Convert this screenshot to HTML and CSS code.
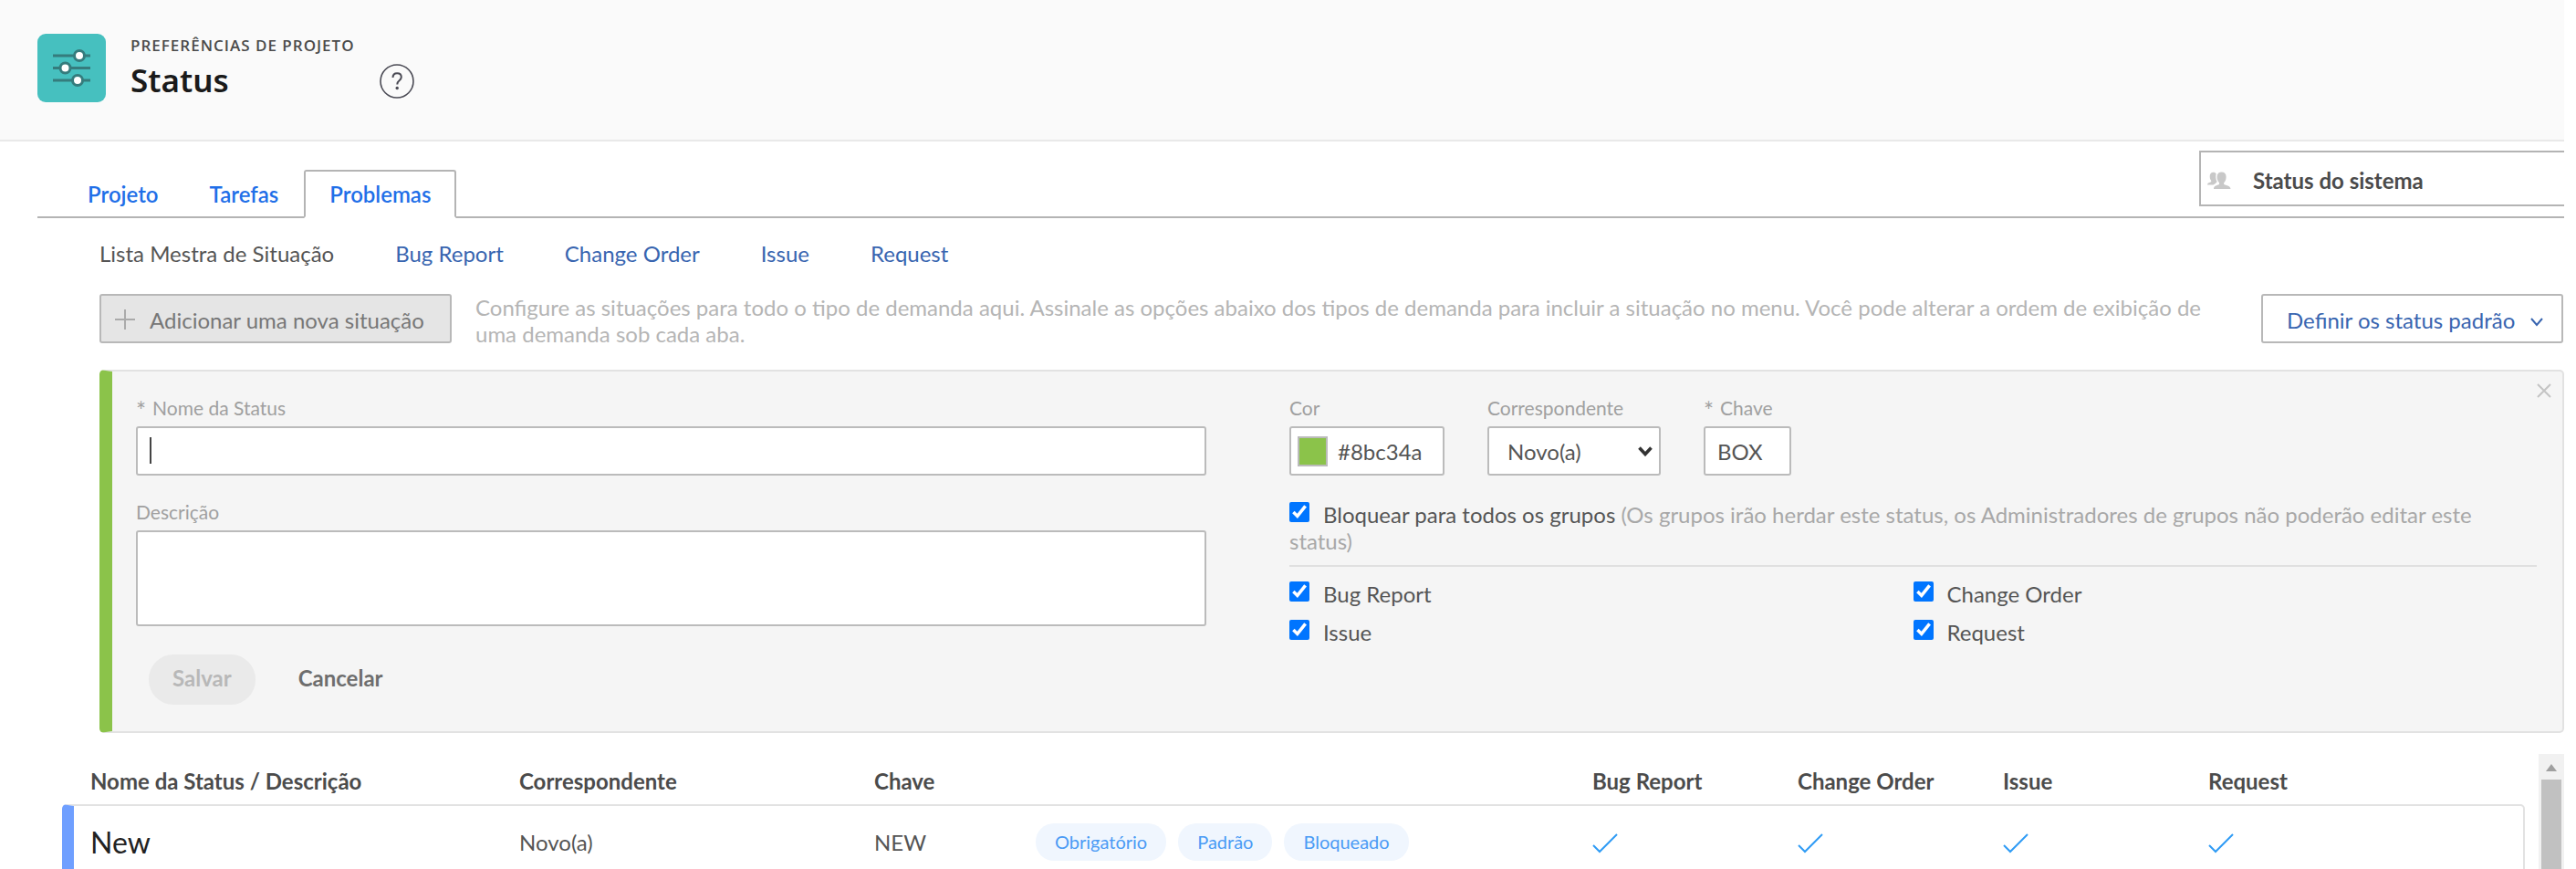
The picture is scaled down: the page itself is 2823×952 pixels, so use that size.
FILE: index.html
```html
<!DOCTYPE html>
<html lang="pt-BR">
<head>
<meta charset="utf-8">
<title>Status</title>
<link rel="stylesheet" href="styles.css">
</head>
<body>
<div class="page">
  <header class="page-header">
    <svg class="app-icon" viewBox="0 0 75 75" aria-hidden="true">
      <rect width="75" height="75" rx="9" fill="#46c0bf"/>
      <g stroke="#357c7d" stroke-width="3" fill="#fff">
        <path d="M17 24h41M17 37.500h41M17 51h41"/>
        <circle cx="46" cy="24" r="5.500"/>
        <circle cx="30.500" cy="37.500" r="5.500"/>
        <circle cx="44" cy="51" r="5.500"/>
      </g>
    </svg>
    <div class="titles">
      <p class="eyebrow">PREFERÊNCIAS DE PROJETO</p>
      <h1 class="title">Status</h1>
    </div>
    <button class="help" type="button" aria-label="Ajuda">
      <svg width="38" height="38" viewBox="0 0 38 38" fill="none" stroke="#4b4b55" stroke-width="1.600">
        <circle cx="19" cy="19" r="18"/>
        <path d="M14.500 15c0-3 2-4.800 4.700-4.800 2.800 0 4.600 1.700 4.600 4.200 0 2-1.200 3-2.500 4.100-1.300 1-2 1.800-2 3.900" stroke-width="2"/>
        <circle cx="19.200" cy="26.500" r="1.700" fill="#4b4b55" stroke="none"/>
      </svg>
    </button>
  </header>

  <nav class="tabs">
    <a class="tab" href="#">Projeto</a>
    <a class="tab" href="#">Tarefas</a>
    <a class="tab tab-active" href="#">Problemas</a>
    <button class="scope" type="button">
      <svg width="26" height="20" viewBox="0 0 26 20" fill="#c8c8c8" aria-hidden="true">
        <path d="M7 19c0-3 2-3.600 5-4.500 1.500-.5 1.300-2 .5-3C11 10 10.600 8 10.600 5.600c0-3.400 2-5.200 5-5.200s5 1.800 5 5.200c0 2.400-.4 4.400-1.900 5.900-.8 1-1 2.500.5 3 3.400.9 6 1.500 6.300 4.500z"/>
        <path d="M0 14.500c0-2 1.600-2.400 3.500-3 1-.4 1-1.400.4-2C3 8.500 2.700 7 2.700 5.300c0-3 1.400-4.500 3.800-4.500 1.500 0 2.600.6 3.200 1.700-.9 2.500-.5 6 .9 8.700l-2.100 2-2 1.300z"/>
      </svg>
      <span>Status do sistema</span>
    </button>
  </nav>

  <nav class="subnav">
    <span class="subnav-current">Lista Mestra de Situação</span>
    <a href="#">Bug Report</a>
    <a href="#">Change Order</a>
    <a href="#">Issue</a>
    <a href="#">Request</a>
  </nav>

  <div class="toolbar">
    <button class="btn btn-add" type="button" disabled>
      <svg width="22" height="22" viewBox="0 0 22 22" stroke="#aaa" stroke-width="2" aria-hidden="true"><path d="M11 0v22M0 11h22"/></svg>
      <span>Adicionar uma nova situação</span>
    </button>
    <p class="hint">Configure as situações para todo o tipo de demanda aqui. Assinale as opções abaixo dos tipos de demanda para incluir a situação no menu. Você pode alterar a ordem de exibição de uma demanda sob cada aba.</p>
    <button class="btn btn-default" type="button">
      <span>Definir os status padrão</span>
      <svg width="14" height="10" viewBox="0 0 14 10" fill="none" stroke="#3865b0" stroke-width="2" aria-hidden="true"><path d="M1 1l6 7 6-7"/></svg>
    </button>
  </div>

  <form class="panel">
    <button class="close" type="button" aria-label="Fechar">
      <svg width="16" height="16" viewBox="0 0 16 16" stroke="#c4c4c4" stroke-width="2"><path d="M1 1l14 14M15 1L1 15"/></svg>
    </button>
    <div class="panel-left">
      <div class="field">
        <label for="name"><span class="req">*</span>Nome da Status</label>
        <div class="caret-box"><input class="control" id="name" type="text"></div>
      </div>
      <div class="field">
        <label for="desc">Descrição</label>
        <textarea class="control area" id="desc"></textarea>
      </div>
      <div class="actions">
        <button class="save" type="submit" disabled>Salvar</button>
        <button class="cancel" type="button">Cancelar</button>
      </div>
    </div>
    <div class="panel-right">
      <div class="field-row">
        <div class="field">
          <label for="color">Cor</label>
          <div class="color-box control">
            <button class="swatch" type="button" aria-label="Escolher cor"></button>
            <input class="color-text" id="color" type="text" value="#8bc34a">
          </div>
        </div>
        <div class="field">
          <label for="equates">Correspondente</label>
          <div class="select-box">
            <select class="control select" id="equates"><option>Novo(a)</option></select>
            <svg class="select-arrow" width="16" height="11" viewBox="0 0 16 11" fill="none" stroke="#333" stroke-width="3.600" aria-hidden="true"><path d="M1.500 1.500L8 8.500l6.500-7"/></svg>
          </div>
        </div>
        <div class="field">
          <label for="key"><span class="req">*</span>Chave</label>
          <input class="control key" id="key" type="text" value="BOX">
        </div>
      </div>
      <p class="lock"><input class="check" id="lock" type="checkbox" checked><label for="lock">Bloquear para todos os grupos</label> <span class="muted">(Os grupos irão herdar este status, os Administradores de grupos não poderão editar este status)</span></p>
      <div class="types">
        <div><input class="check" id="t1" type="checkbox" checked><label for="t1">Bug Report</label></div>
        <div><input class="check" id="t2" type="checkbox" checked><label for="t2">Change Order</label></div>
        <div><input class="check" id="t3" type="checkbox" checked><label for="t3">Issue</label></div>
        <div><input class="check" id="t4" type="checkbox" checked><label for="t4">Request</label></div>
      </div>
    </div>
  </form>

  <div class="list">
    <table class="statuses">
      <colgroup><col class="c-name"><col class="c-eq"><col class="c-key"><col class="c-tags"><col class="c-type"><col class="c-type"><col class="c-type"><col></colgroup>
      <thead>
        <tr><th>Nome da Status / Descrição</th><th>Correspondente</th><th>Chave</th><th></th><th>Bug Report</th><th>Change Order</th><th>Issue</th><th>Request</th></tr>
      </thead>
      <tbody>
        <tr>
          <td class="name">New</td><td>Novo(a)</td><td>NEW</td>
          <td><div class="tags"><span class="tag">Obrigatório</span><span class="tag">Padrão</span><span class="tag">Bloqueado</span></div></td>
          <td><svg class="tick" viewBox="0 0 28 22"><path d="M1 13l7 7L27 1"/></svg></td>
          <td><svg class="tick" viewBox="0 0 28 22"><path d="M1 13l7 7L27 1"/></svg></td>
          <td><svg class="tick" viewBox="0 0 28 22"><path d="M1 13l7 7L27 1"/></svg></td>
          <td><svg class="tick" viewBox="0 0 28 22"><path d="M1 13l7 7L27 1"/></svg></td>
        </tr>
      </tbody>
    </table>
    <div class="scrollbar" aria-hidden="true">
      <svg width="28" height="28" viewBox="0 0 28 28" fill="#a0a0a0"><path d="M14 11l6 8H8z"/></svg>
      <div class="thumb"></div>
    </div>
  </div>
</div>
</body>
</html>
```
FILE: styles.css
```css
* { box-sizing: border-box; }

body {
  margin: 0;
  background: #fff;
  color: #555;
  font: 24px/29px Lato, "Liberation Sans", sans-serif;
}

button, input, select, textarea { font: inherit; color: inherit; margin: 0; }
button { padding: 0; border: 0; background: none; }
a { text-decoration: none; }
p, h1 { margin: 0; }
svg { display: block; flex: none; }

.page {
  display: flex;
  flex-direction: column;
  height: 100vh;
  padding-right: 13px;
  overflow: hidden;
}

.page-header {
  display: flex;
  align-items: flex-start;
  padding: 37px 41px 39px;
  background: #fafafa;
  border-bottom: 2px solid #e9e9e9;
}
.app-icon { width: 75px; height: 75px; margin-right: 27px; }
.titles { margin-right: 27px; padding-top: 1px; }
.eyebrow {
  color: #4b4b4b;
  font: 600 17px/24px "Open Sans", sans-serif;
  letter-spacing: 1px;
}
.title {
  color: #1a1a1a;
  font: 600 35px/52px "Noto Sans", sans-serif;
}
.help { margin-top: 33px; }

.tabs {
  display: flex;
  align-items: flex-end;
  margin-left: 41px;
  height: 84px;
  border-bottom: 2px solid #b4b4b4;
}
.tab {
  margin: 0 0 -2px;
  padding: 10px 26px;
  border: 2px solid transparent;
  color: #1f6fe8;
  font-weight: 600;
}
.tab:first-child { margin-left: 27px; }
.tab-active {
  background: #fff;
  border-color: #b4b4b4 #b4b4b4 #fff;
  border-radius: 3px 3px 0 0;
}
.scope {
  display: flex;
  align-items: center;
  align-self: flex-start;
  gap: 24px;
  width: 400px;
  height: 61px;
  margin: 10px 0 0 auto;
  padding: 4px 0 0 7px;
  border: 2px solid #b4b4b4;
  border-right: 0;
  color: #4b4b4b;
  font-weight: 700;
}

.subnav {
  display: flex;
  gap: 67px;
  padding: 24px 0 30px 109px;
  color: #3865b0;
}
.subnav a { color: inherit; }
.subnav-current { color: #555; }

.toolbar {
  display: flex;
  align-items: flex-start;
  padding-left: 109px;
}
.btn {
  display: flex;
  flex: none;
  align-items: center;
  height: 54px;
  padding-top: 2px;
  border: 2px solid #b8b8b8;
  border-radius: 3px;
  white-space: nowrap;
}
.btn-add {
  width: 386px;
  gap: 16px;
  padding-left: 15px;
  background: #e5e5e5;
  color: #777;
}
.btn-default {
  justify-content: space-between;
  width: 331px;
  margin-right: 1px;
  padding: 2px 20px 0 26px;
  color: #3865b0;
}
.btn-default svg { margin-top: 6px; }
.hint { flex: 1; padding: 0 40px 0 26px; color: #b5b5b5; }

.panel {
  position: relative;
  display: flex;
  gap: 91px;
  margin: 25px 0 0 109px;
  padding: 26px 28px 29px 27px;
  background: #f5f5f5;
  border: 2px solid #e2e2e2;
  border-left: 14px solid #8bc34a;
  border-radius: 5px;
}
.close { position: absolute; top: 13px; right: 12px; }
.panel-left { flex: 1173; margin-left: -1px; }
.panel-right { flex: 1367; }

.field label {
  display: block;
  margin-bottom: 6px;
  color: #a0a0a0;
  font-size: 21px;
  line-height: 28px;
}
.req {
  margin-right: 7px;
  font-size: 26px;
  line-height: 0;
  vertical-align: -5px;
}
.control {
  display: block;
  width: 100%;
  height: 54px;
  padding: 0 13px;
  background: #fff;
  border: 2px solid #bbb;
  border-radius: 3px;
  color: #555;
}
.caret-box { position: relative; margin-bottom: 26px; }
.caret-box::after {
  content: "";
  position: absolute;
  top: 12px;
  left: 15px;
  width: 2px;
  height: 29px;
  background: #444;
}
.area { height: 105px; resize: none; }
.actions { display: flex; gap: 21px; margin: 31px 0 0 14px; }
.save, .cancel {
  height: 55px;
  padding: 0 26px 4px;
  border-radius: 27px;
  color: #6e6e6e;
  font-weight: 700;
}
.save { background: #eaeaea; color: #b8b8b8; }

.field-row { display: flex; gap: 47px; margin-bottom: 28px; }
.color-box {
  display: flex;
  align-items: center;
  gap: 11px;
  width: 170px;
  padding: 0 7px;
}
.swatch {
  flex: none;
  width: 33px;
  height: 33px;
  background: #8bc34a;
  border: 2px solid #bbb;
}
.color-text { width: 100px; padding: 0; border: 0; background: none; }
.select-box { position: relative; width: 190px; }
.select { appearance: none; padding: 0 20px; }
.select-arrow { position: absolute; top: 22px; right: 9px; }
.key { width: 96px; }

.check {
  width: 22px;
  height: 22px;
  margin-right: 15px;
  accent-color: #0075ff;
  vertical-align: 1px;
}
.muted { color: #a8a8a8; }
.lock { padding-bottom: 12px; border-bottom: 2px solid #e0e0e0; }
.types {
  display: grid;
  grid-template-columns: 1fr 1fr;
  row-gap: 13px;
  padding-top: 15px;
}

.list {
  display: flex;
  flex: 1;
  gap: 15px;
  min-height: 0;
  margin: 23px 0 0 68px;
}
.statuses {
  flex: 1;
  align-self: flex-start;
  table-layout: fixed;
  border-spacing: 0;
}
.c-name { width: 501px; }
.c-eq { width: 389px; }
.c-key { width: 177px; }
.c-tags { width: 610px; }
.c-type { width: 225px; }
th, td { padding: 0; text-align: left; }
th {
  height: 55px;
  padding-top: 4px;
  color: #4b4b4b;
  font-weight: 700;
}
th:first-child { padding-left: 31px; }
td { height: 82px; border: solid #e2e2e2; border-width: 2px 0; }
td:first-child {
  padding-left: 18px;
  border-left: 13px solid #6f9fff;
  border-radius: 5px 0 0 5px;
}
td:last-child { border-right-width: 2px; border-radius: 0 5px 5px 0; }
.name { color: #222; font-size: 32px; }
.tags { display: flex; gap: 13px; }
.tag {
  padding: 6px 21px 7px;
  border-radius: 20px;
  background: #f0f6fe;
  color: #4a9bf5;
  font-size: 20px;
  line-height: 28px;
}
.tick { width: 28px; height: 22px; margin-top: 4px; fill: none; stroke: #2f9bf5; stroke-width: 2; }

.scrollbar {
  display: flex;
  flex: none;
  flex-direction: column;
  width: 28px;
  background: #f1f1f1;
}
.thumb { flex: 1; margin: 0 3px; background: #c1c1c1; }
```
